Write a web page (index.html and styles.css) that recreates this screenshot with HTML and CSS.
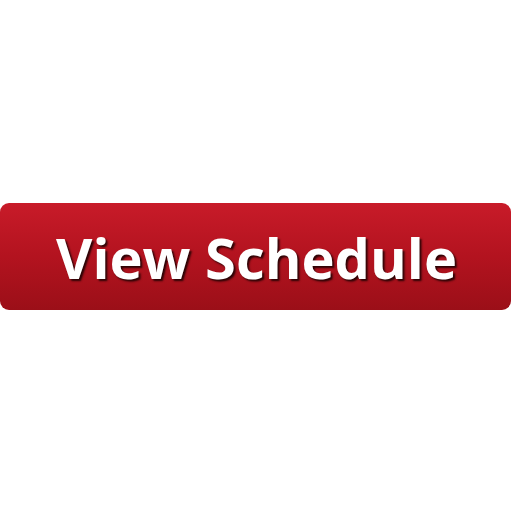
FILE: index.html
```html
<!DOCTYPE html>
<html>
<head>
<meta charset="utf-8">
<link rel="stylesheet" href="styles.css">
</head>
<body>
<div class="page">
  <a class="btn">View Schedule</a>
</div>
</body>
</html>
```
FILE: styles.css
```css
html, body {
  margin: 0;
  padding: 0;
  background: #ffffff;
}
.page {
  width: 512px;
  height: 512px;
  display: flex;
  align-items: center;
  justify-content: center;
}
.btn {
  box-sizing: border-box;
  width: 511px;
  height: 107px;
  margin-left: 0;
  margin-right: 1px;
  margin-top: 1px;
  border-radius: 9px;
  background: linear-gradient(to bottom, #c81b29 0%, #b3131f 50%, #9b0f18 100%);
  display: flex;
  align-items: center;
  justify-content: center;
  color: #ffffff;
  font-family: "Open Sans", sans-serif;
  font-weight: 700;
  font-size: 56px;
  letter-spacing: 0;
  padding-left: 2px;
  text-shadow: 2px 2px 2px rgba(20, 0, 0, 0.85);
}
```
